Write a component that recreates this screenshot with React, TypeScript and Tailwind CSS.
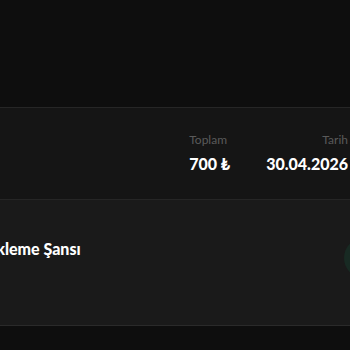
export default function App() {
  return (
    <div className="w-[350px] h-[350px] overflow-hidden bg-[#0e0e0e] flex flex-col" style={{ fontFamily: 'Lato, "Noto Sans", sans-serif' }}>
      <div className="h-[107px] shrink-0 bg-[#0e0e0e]" />
      <div className="h-[93px] shrink-0 bg-[#151515] border-y border-[#262626] flex items-center justify-end gap-[36px] pr-[2px]">
        <div className="flex flex-col gap-[8px] items-start mt-[-2px]">
          <span className="text-[12px] leading-[14px] text-[#5a5a5a]">Toplam</span>
          <span className="text-[16px] leading-[18px] font-black text-white">700 ₺</span>
        </div>
        <div className="flex flex-col gap-[8px] items-end mt-[-2px]">
          <span className="text-[12px] leading-[14px] text-[#5a5a5a]">Tarih</span>
          <span className="text-[16px] leading-[18px] font-black text-white">30.04.2026</span>
        </div>
      </div>
      <div className="h-[126px] shrink-0 bg-[#1a1a1a] border-b border-[#2a2a2a] flex items-center justify-between pb-[10px]">
        <span className="text-[16px] font-black text-white ml-[-22px] mt-[-18px] whitespace-nowrap">Yükleme Şansı</span>
        <div className="w-[40px] h-[40px] rounded-full bg-[#182a23] mr-[-34px]" />
      </div>
      <div className="flex-1 bg-[#0e0e0e]" />
    </div>
  );
}
